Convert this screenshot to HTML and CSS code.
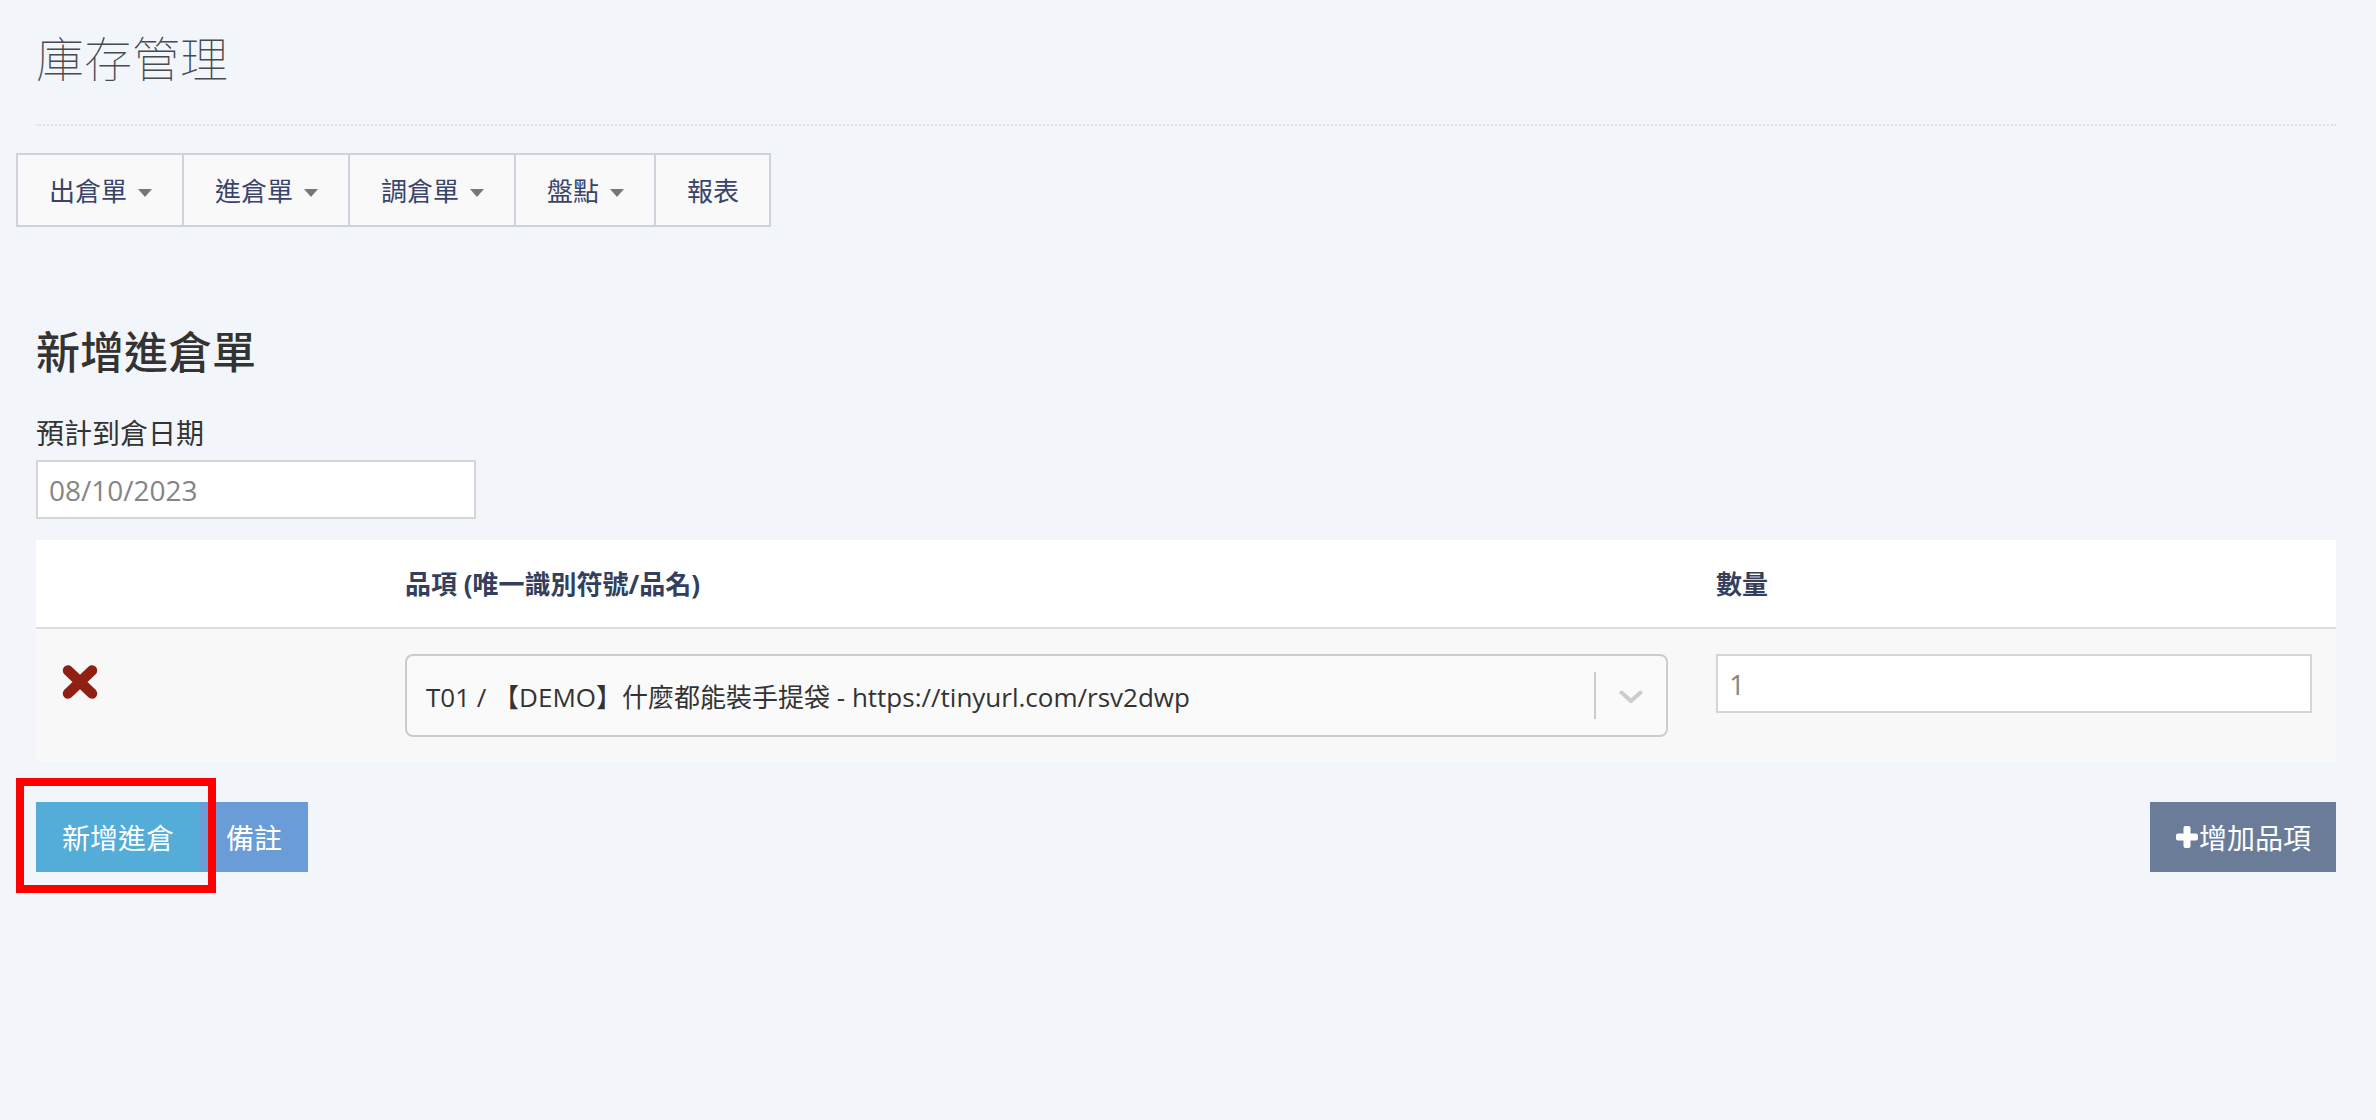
FILE: index.html
```html
<!DOCTYPE html>
<html lang="zh-Hant">
<head>
<meta charset="utf-8">
<title>庫存管理</title>
<link rel="stylesheet" href="styles.css">
</head>
<body>
<div class="page">
  <div class="page-header">
    <h1 class="page-title">庫存管理</h1>
  </div>

  <div class="nav-group">
    <div class="nav-btn">出倉單<span class="caret"></span></div>
    <div class="nav-btn">進倉單<span class="caret"></span></div>
    <div class="nav-btn">調倉單<span class="caret"></span></div>
    <div class="nav-btn">盤點<span class="caret"></span></div>
    <div class="nav-btn">報表</div>
  </div>

  <h2 class="form-title">新增進倉單</h2>
  <label class="field-label">預計到倉日期</label>
  <input class="text-input date-input" type="text" value="08/10/2023">

  <table class="items">
    <thead>
      <tr>
        <th class="col-del"></th>
        <th class="col-item">品項 (唯一識別符號/品名)</th>
        <th class="col-qty">數量</th>
      </tr>
    </thead>
    <tbody>
      <tr>
        <td class="col-del">
          <svg class="del-icon" width="36" height="34" viewBox="0 0 36 34">
            <path d="M6 5.5 L30 28.5 M30 5.5 L6 28.5" stroke="#901f14" stroke-width="10.5" stroke-linecap="round" fill="none"/>
          </svg>
        </td>
        <td class="col-item">
          <div class="select">
            <div class="select-value">T01 / 【DEMO】什麼都能裝手提袋 - https://tinyurl.com/rsv2dwp</div>
            <span class="select-sep"></span>
            <span class="select-arrow">
              <svg width="24" height="14" viewBox="0 0 24 14"><path d="M2.5 2.5 L12 11 L21.5 2.5" stroke="#cccccc" stroke-width="4" fill="none" stroke-linecap="round" stroke-linejoin="round"/></svg>
            </span>
          </div>
        </td>
        <td class="col-qty">
          <input class="text-input qty-input" type="text" value="1">
        </td>
      </tr>
    </tbody>
  </table>

  <div class="actions">
    <div class="btn-pair">
      <div class="btn btn-submit">新增進倉<span class="highlight"></span></div>
      <div class="btn btn-note">備註</div>
    </div>
    <div class="btn btn-add">
      <svg class="plus-icon" width="22" height="22" viewBox="0 0 22 22">
        <rect x="7.5" y="0" width="7" height="22" rx="2" fill="#fff"/>
        <rect x="0" y="7.5" width="22" height="7" rx="2" fill="#fff"/>
      </svg>增加品項
    </div>
  </div>
</div>
</body>
</html>
```

FILE: styles.css
```css
html, body {
  margin: 0;
  padding: 0;
}

body {
  background: #f2f5fa;
  font-family: "Open Sans", "Noto Sans CJK TC", "Noto Sans", sans-serif;
  color: #393939;
}

.page {
  padding: 28px 40px 40px 36px;
}

.page-header {
  padding-bottom: 40px;
  border-bottom: 2px dotted #dde1e6;
}

.page-title {
  margin: 0;
  font-family: "Noto Sans CJK TC", "Open Sans", sans-serif;
  font-size: 48px;
  line-height: 56px;
  font-weight: 100;
  color: #464a51;
}

.nav-group {
  display: inline-flex;
  margin: 27px 0 0 -20px;
  border: 2px solid #ccd3dc;
  background: #f9f9f9;
}

.nav-btn {
  display: flex;
  align-items: center;
  height: 70px;
  padding: 0 30px 0 31px;
  font-size: 26px;
  color: #38446a;
  border-left: 2px solid #ccd3dc;
}

.nav-btn:first-child {
  border-left: none;
}

.caret {
  display: inline-block;
  width: 0;
  height: 0;
  margin-left: 11px;
  margin-top: 6px;
  border-top: 8px solid #777777;
  border-left: 7.5px solid transparent;
  border-right: 7.5px solid transparent;
}

.form-title {
  margin: 99px 0 0;
  font-size: 44px;
  line-height: 52px;
  font-weight: 500;
  color: #333333;
}

.field-label {
  display: block;
  margin-top: 37px;
  font-size: 28px;
  line-height: 36px;
  color: #333333;
}

.text-input {
  display: block;
  box-sizing: border-box;
  height: 59px;
  margin: 0;
  padding: 0 11px;
  border: 2px solid #d5d5d5;
  border-radius: 0;
  background: #ffffff;
  font-family: "Open Sans", "Noto Sans CJK TC", sans-serif;
  font-size: 28px;
  color: #858585;
  outline: none;
}

.date-input {
  width: 440px;
  margin-top: 9px;
}

.qty-input {
  width: 100%;
}

.items {
  width: 100%;
  margin-top: 21px;
  border-collapse: collapse;
  table-layout: fixed;
}

.items th,
.items td {
  box-sizing: border-box;
}

.items th {
  padding: 26px 24px 25px;
  background: #ffffff;
  border-bottom: 2px solid #dddddd;
  text-align: left;
  font-size: 26px;
  line-height: 36px;
  font-weight: 700;
  color: #343f5e;
}

.items td {
  padding: 25px 24px;
  background: #f8f8f8;
  vertical-align: top;
}

.col-del { width: 15%; }
.col-item { width: 57%; }
.col-qty { width: 28%; }

.del-icon {
  display: block;
  margin: 11px 0 0 2px;
}

.select {
  display: flex;
  align-items: center;
  box-sizing: border-box;
  height: 83px;
  border: 2px solid #cccccc;
  border-radius: 8px;
  background: #fafafa;
}

.select-value {
  flex: 1;
  padding-left: 19px;
  font-size: 26px;
  color: #333333;
  white-space: nowrap;
  overflow: hidden;
}

.select-sep {
  width: 2px;
  height: 47px;
  background: #cccccc;
}

.select-arrow {
  display: flex;
  align-items: center;
  padding: 2px 23px 0 23px;
}

.actions {
  display: flex;
  justify-content: space-between;
  margin-top: 40px;
}

.btn-pair {
  display: flex;
}

.btn {
  display: flex;
  align-items: center;
  box-sizing: border-box;
  height: 70px;
  padding: 0 26px;
  font-size: 28px;
  color: #ffffff;
}

.btn-submit {
  position: relative;
  background: #54acd8;
}

.btn-note {
  background: #6a9dd8;
}

.btn-add {
  padding: 0 25px 0 26px;
  background: #6b7c99;
}

.plus-icon {
  display: block;
  margin-right: 1px;
}

.highlight {
  position: absolute;
  left: -20px;
  top: -24px;
  width: 200px;
  height: 115px;
  box-sizing: border-box;
  border: 8px solid #ff0000;
  z-index: 2;
  pointer-events: none;
}
```
